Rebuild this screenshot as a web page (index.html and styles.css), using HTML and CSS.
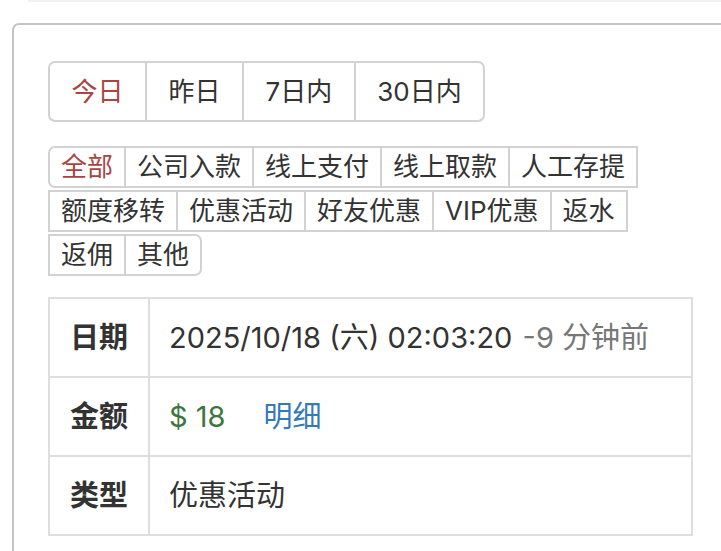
FILE: index.html
```html
<!DOCTYPE html>
<html lang="zh-CN">
<head>
<meta charset="utf-8">
<title>记录</title>
<link rel="stylesheet" href="styles.css">
</head>
<body>
<div class="prev-edge"></div>
<div class="card">
  <div class="range-group">
    <span class="btn active">今日</span>
    <span class="btn">昨日</span>
    <span class="btn">7日内</span>
    <span class="btn">30日内</span>
  </div>
  <div class="type-group">
    <span class="tag active">全部</span>
    <span class="tag">公司入款</span>
    <span class="tag">线上支付</span>
    <span class="tag">线上取款</span>
    <span class="tag">人工存提</span>
    <span class="tag">额度移转</span>
    <span class="tag">优惠活动</span>
    <span class="tag">好友优惠</span>
    <span class="tag">VIP优惠</span>
    <span class="tag">返水</span>
    <span class="tag">返佣</span>
    <span class="tag">其他</span>
  </div>
  <table class="detail">
    <tr>
      <th>日期</th>
      <td>2025/10/18 (六) 02:03:20 <span class="muted">-9 分钟前</span></td>
    </tr>
    <tr>
      <th>金额</th>
      <td><span class="amount">$ 18</span><a class="link" href="#">明细</a></td>
    </tr>
    <tr>
      <th>类型</th>
      <td>优惠活动</td>
    </tr>
  </table>
</div>
</body>
</html>
```

FILE: styles.css
```css
html, body {
  margin: 0;
  padding: 0;
  overflow: hidden;
  background: #fff;
}
body {
  font-family: "Inter", "Noto Sans CJK SC", sans-serif;
  color: #333;
  width: 721px;
  height: 551px;
}
.prev-edge {
  height: 2px;
  margin-left: 28px;
  background: #f1f1f1;
}
.card {
  margin: 21px 0 0 12px;
  width: 760px;
  height: 600px;
  border: 2px solid #c4c4c4;
  border-radius: 7px;
  padding: 36px 0 0 34px;
  box-sizing: border-box;
}
.range-group {
  display: inline-flex;
  font-size: 26px;
}
.range-group .btn {
  padding: 12px 21.5px;
  line-height: 33px;
  border: 2px solid #d2d2d2;
  margin-right: -2px;
  background: #fff;
}
.range-group .btn:first-child { border-radius: 7px 0 0 7px; }
.range-group .btn:last-child { border-radius: 0 7px 7px 0; }
.btn.active, .tag.active { color: #a94442; }

.type-group {
  display: flex;
  flex-wrap: wrap;
  row-gap: 2px;
  width: 600px;
  margin-top: 24px;
  font-size: 26px;
}
.type-group .tag {
  padding: 4px 11px;
  line-height: 30px;
  border: 2px solid #d2d2d2;
  margin-right: -2px;
  background: #fff;
}
.type-group .tag:first-child { border-radius: 7px 0 0 7px; }
.type-group .tag:last-child { border-radius: 0 7px 7px 0; }

.detail {
  margin-top: 21px;
  width: 645px;
  border-collapse: collapse;
  font-size: 29px;
}
.detail th, .detail td {
  border: 2px solid #dedede;
  height: 77px;
  padding: 0 19px;
  line-height: 1;
  vertical-align: middle;
  text-align: left;
}
.detail th {
  width: 1%;
  padding: 0 20px;
  white-space: nowrap;
  font-weight: 700;
  text-align: center;
}
.muted {
  color: #777;
  margin-left: 2px;
}
.amount { color: #3c763d; }
.link {
  color: #337ab7;
  text-decoration: none;
  margin-left: 38px;
}
```
